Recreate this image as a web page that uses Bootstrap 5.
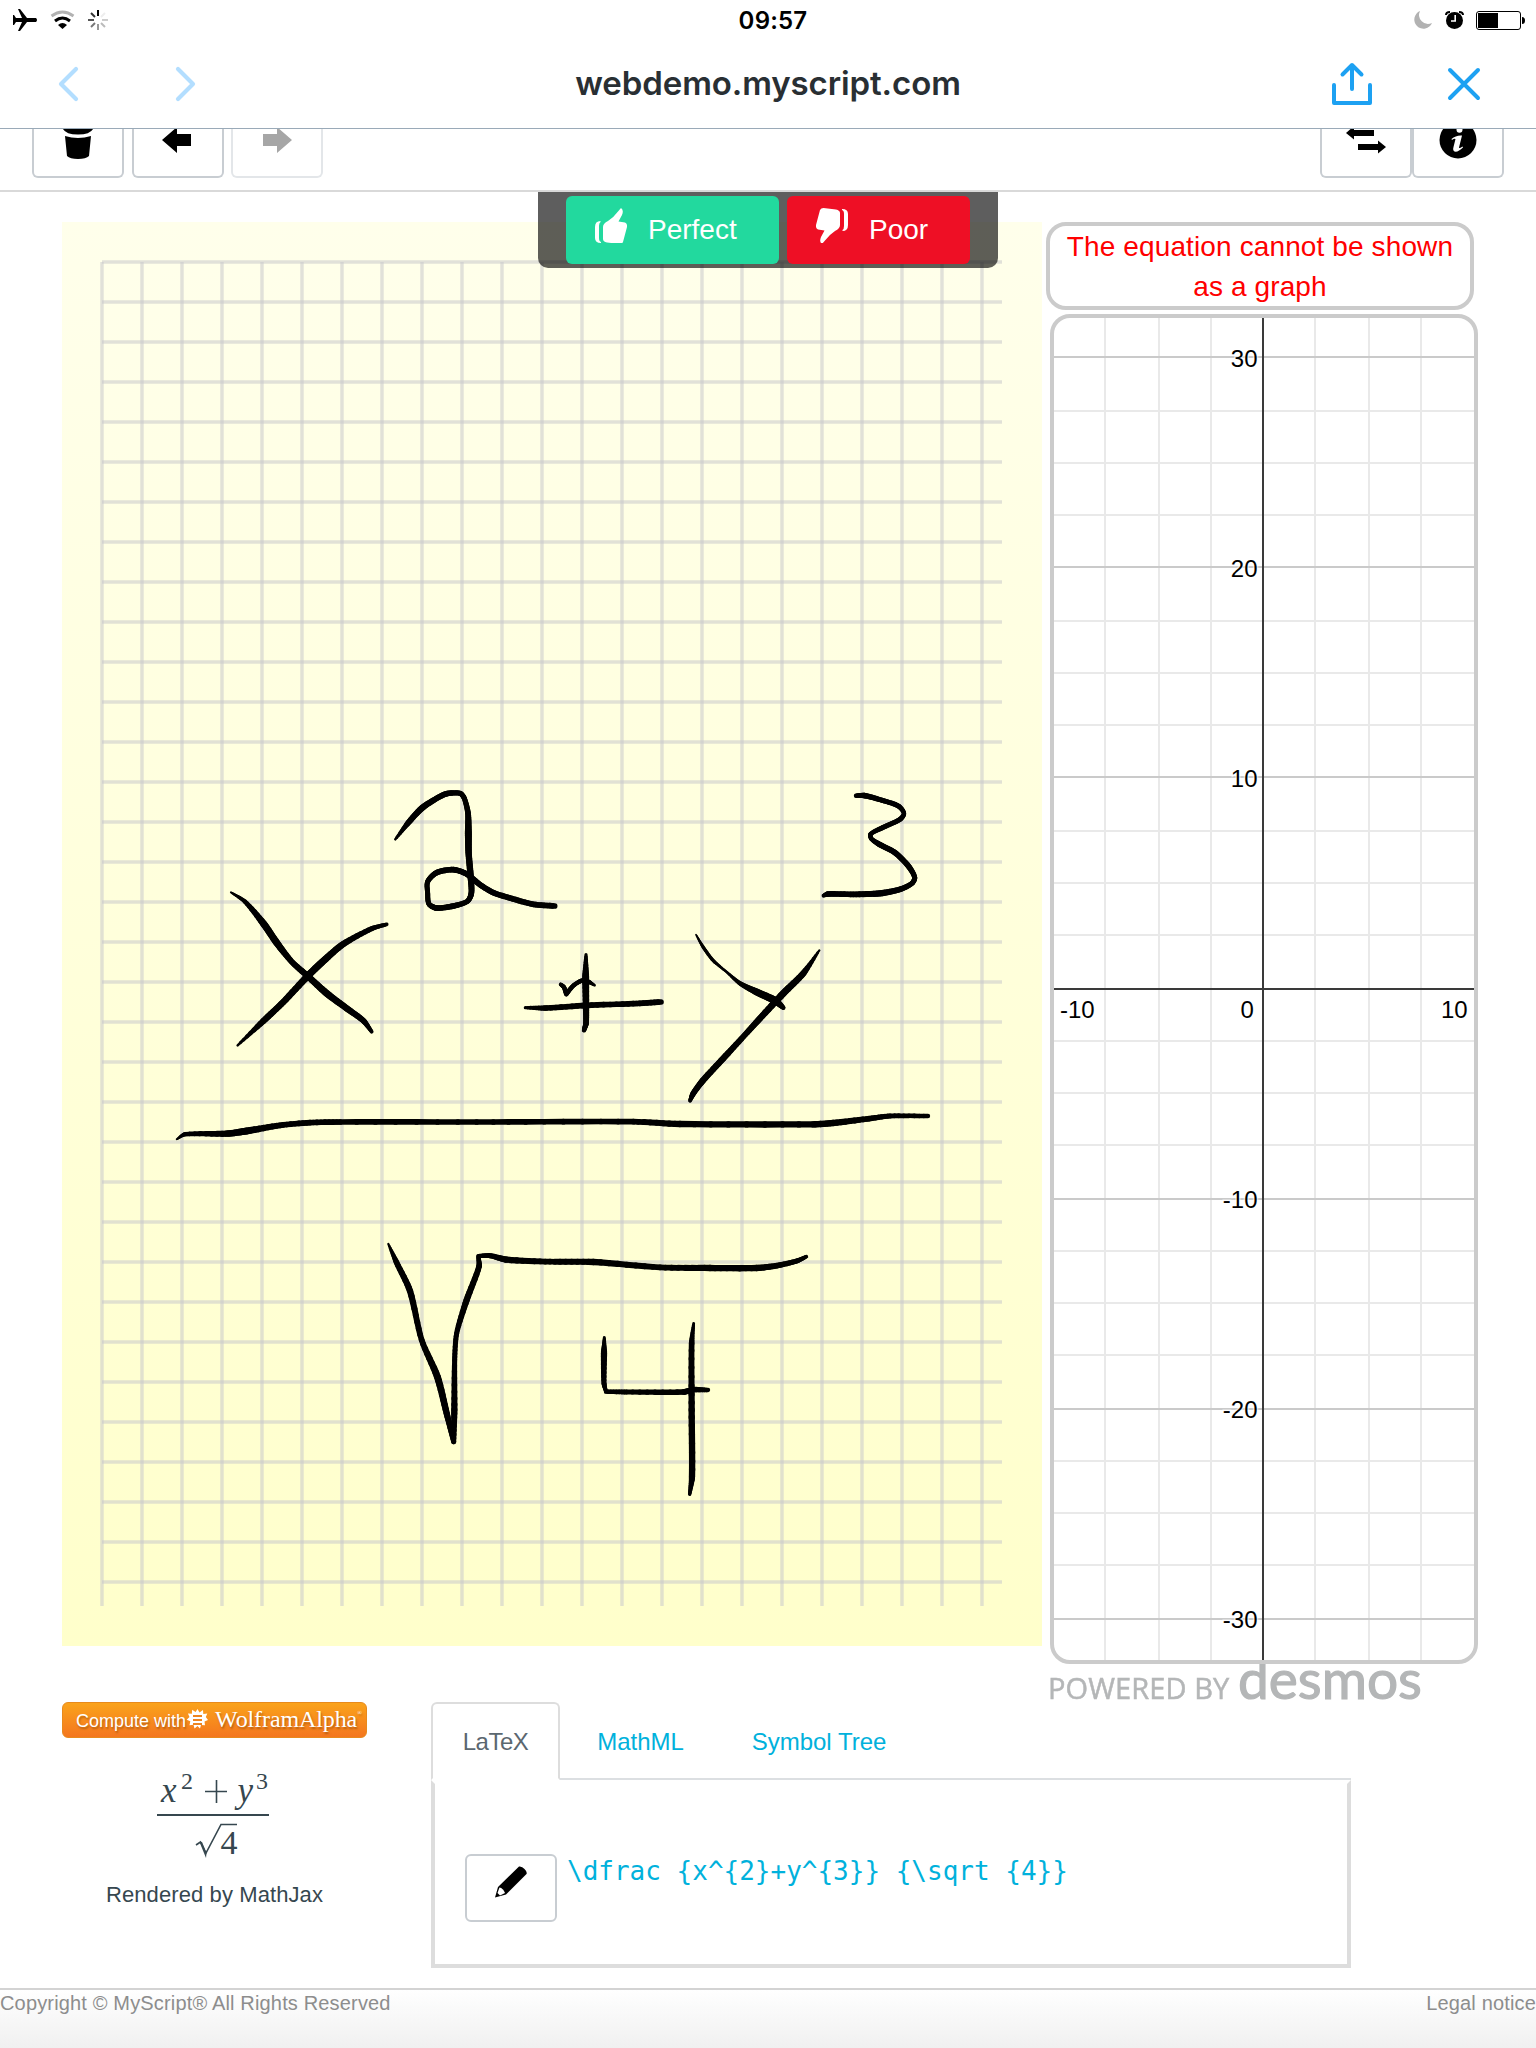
<!DOCTYPE html>
<html lang="en">
<head>
<meta charset="utf-8">
<meta name="viewport" content="width=device-width, initial-scale=1">
<title>webdemo.myscript.com</title>
<link href="https://cdn.jsdelivr.net/npm/bootstrap@5.3.0/dist/css/bootstrap.min.css" rel="stylesheet">
<style>
body{font-family:"Liberation Sans",Arial,sans-serif;color:#36474f;width:1536px;height:2048px;overflow:hidden;background:#fff}
svg{display:block;flex:none}
.ios-head{height:129px;border-bottom:1px solid #9aaab8;font-family:Inter,sans-serif;color:#292f33}
.status-row{height:40px;color:#000}
.clock{font-size:24px;font-weight:600;line-height:42px;letter-spacing:.2px;padding-left:10px}
.url-row{height:88px}
.url-title{font-size:33px;font-weight:600;line-height:86px;letter-spacing:-.1px;white-space:nowrap}
.side{width:400px}
.tool-row{height:63px;border-bottom:2px solid #d9d9d9;padding:0 32px}
.tool-btn{width:92px;height:49px;border:2px solid #c8cdd2;border-top:0;border-radius:0 0 6px 6px;padding:0;background:#fff}
.tool-btn.off{border-color:#e3e6e9;margin-left:-1px}
.tool-btn svg{margin-left:-2px}
.stage{height:1510px;padding:30px 0 0 62px;gap:4px}
.paper{width:980px;height:1424px;background:linear-gradient(#ffffeb,#ffffcb)}
.rating{left:538px;top:0;width:460px;height:76px;padding:4px 28px 4px;background:rgba(0,0,0,.63);border-radius:0 0 10px 10px;gap:8px}
.rate-btn{height:68px;border:0;border-radius:6px;color:#fff;font-size:28px;line-height:40px;padding:7px 0 0 29px;gap:21px}
.rate-btn.good{background:#22d99e;width:213px}
.rate-btn.bad{background:#ee0f25;width:183px}
.rate-btn span{padding-top:7px}
.notice{width:428px;height:88px;border:4px solid #cbcbcb;border-radius:20px;color:#f00;font-size:28px;line-height:40px;letter-spacing:.12px;padding-top:1px;white-space:nowrap}
.plot{width:428px;height:1350px;border:4px solid #cbcbcb;border-radius:20px;margin:4px 0 0 4px;overflow:hidden;background:#fff}
.powered{height:38px;color:#b4b6b7;padding-left:2px;filter:blur(.7px);white-space:nowrap}
.powered .by{font:400 29px/40px "Open Sans",sans-serif;letter-spacing:.1px;padding-top:4px;width:186px;-webkit-text-stroke:.5px #b4b6b7}
.powered .brand{font:400 55px/66px Lato,sans-serif;margin:-19px 0 0 4px;-webkit-text-stroke:1.2px #b4b6b7}
.results{padding-left:62px;gap:64px;height:286px}
.wolf{width:305px;height:36px;border:1px solid #e88a1c;border-radius:6px;background:linear-gradient(#faa31b,#f4761f);color:#fff;padding:0 0 0 13px;text-shadow:1px 2px 2px rgba(120,60,0,.5);white-space:nowrap}
.wolf .cw{font-size:18px;line-height:24px;padding-top:6px;width:103px}
.wolf .wa{font:24px/32px "Liberation Serif",serif;letter-spacing:-.1px}
.left-col{width:305px}
.mj{font-size:22px;line-height:30px;letter-spacing:.1px}
.right-col{width:920px}
.nav-tabs.lang-tabs{border-bottom:2px solid #dcdfe2;height:78px}
.lang-tabs .nav-link{height:78px;border:2px solid transparent;font-size:24px;line-height:36px;padding:20px 0;color:#00b1dc;text-align:center;margin-bottom:-2px;border-radius:6px 6px 0 0}
.lang-tabs .nav-link.active{border-color:#ddd #ddd #fff;color:#5b6770;letter-spacing:-.5px}
.code-box{height:188px;border:4px solid #ddd;border-top:4px solid #fff;padding:70px 0 0 30px;gap:10px}
.pen-btn{width:92px;height:68px;border:2px solid #c8cdd2;border-radius:6px;background:#fff;padding:0}
.code-text{font:26px/34px "DejaVu Sans Mono",monospace;color:#00b1dc;white-space:pre}
.foot{height:60px;border-top:2px solid #d3d3d3;background:linear-gradient(#fff,#f0f0f0);color:#8d8d8d;font-size:20px;line-height:27px;letter-spacing:.16px}
</style>
<script src="https://cdn.jsdelivr.net/npm/bootstrap@5.3.0/dist/js/bootstrap.bundle.min.js"></script>
</head>
<body>
<header class="ios-head">
  <div class="status-row d-flex justify-content-between">
    <svg class="side" height="40" viewBox="0 0 400 40">
      <path d="M36 18H27L20 9H18L22 18H16L14 15H13V25H14L16 22H22L18 31H20L27 22H36Q38 20 36 18Z"/>
      <path d="M51.500 16Q62.500 8 73.500 16" fill="none" stroke="#b2b2b2" stroke-width="2.800"/>
      <path d="M55 21Q62.500 15 70 21" fill="none" stroke="#000" stroke-width="3"/>
      <path d="M58 25Q62.500 21 67 25L62.500 29Z"/>
      <g stroke-width="2" fill="none"><path stroke="#000" d="M98 10v6"/><path stroke="#eee" d="M101 17l4-4"/><path stroke="#ccc" d="M102 20h6"/><path stroke="#bbb" d="M101 23l4 4"/><path stroke="#999" d="M98 24v6"/><path stroke="#777" d="M95 23l-4 4"/><path stroke="#555" d="M94 20h-6"/><path stroke="#333" d="M95 17l-4-4"/></g>
    </svg>
    <div class="clock d-flex flex-fill justify-content-center">09:57</div>
    <svg class="side" height="40" viewBox="1136 0 400 40">
      <path d="M1420 11A9.200 9.200 0 1 0 1432 23A9 9 0 0 1 1420 11Z" fill="#b2b2b2"/>
      <circle cx="1454.500" cy="20.500" r="8.500"/><path d="M1446 15Q1446 12 1450 12M1459 12Q1463 12 1463 15" fill="none" stroke="#000" stroke-width="2"/>
      <path d="M1455.200 15V21H1451" fill="none" stroke="#fff" stroke-width="1.600"/>
      <rect x="1476.500" y="11.500" width="44" height="18" rx="2.500" fill="none" stroke="#000"/><path d="M1478 13H1498V28H1478ZM1522 17Q1525 17 1525 20.500Q1525 24 1522 24Z"/>
    </svg>
  </div>
  <div class="url-row d-flex justify-content-between">
    <svg class="side" height="88" viewBox="0 40 400 88" fill="none" stroke="#b3deff" stroke-width="4.200" stroke-linecap="round" stroke-linejoin="round"><path d="M76 69L61 84L76 99M178 69L193 84L178 99"/></svg>
    <div class="url-title d-flex flex-fill justify-content-center">webdemo.myscript.com</div>
    <svg class="side" height="88" viewBox="1136 40 400 88" fill="none" stroke="#1da1f2" stroke-width="4" stroke-linecap="round" stroke-linejoin="round"><path d="M1352 89V65M1342.500 74.500L1352 65L1361.500 74.500M1334 85V103H1370V85M1450 70L1478 98M1478 70L1450 98"/></svg>
  </div>
</header>
<div class="tool-row d-flex align-items-start justify-content-between">
  <div class="d-flex gap-2">
    <button class="tool-btn" aria-label="Clear"><svg width="92" height="47" viewBox="32 129 92 47"><path d="M62.500 128H93.500Q91 134.500 78 134.500Q65 134.500 62.500 128ZM65 136Q78 140 91 136L89 156Q86 159 78 159Q70 159 67 156Z"/></svg></button>
    <button class="tool-btn" aria-label="Undo"><svg width="92" height="47" viewBox="132 129 92 47"><path d="M162 140L177 127V134H191V146H177V153Z"/></svg></button>
    <button class="tool-btn off" aria-label="Redo" disabled><svg width="92" height="47" viewBox="231 129 92 47"><path fill="#a6a6a6" d="M292 140L277 127V134H263V146H277V153Z"/></svg></button>
  </div>
  <div class="d-flex">
    <button class="tool-btn" aria-label="Swap"><svg width="92" height="47" viewBox="1320 129 92 47"><path d="M1346 133L1354 126V130H1374V136H1354V139.500ZM1386 147L1378 140.500V144H1358V150H1378V153.500Z"/></svg></button>
    <button class="tool-btn" aria-label="Info"><svg width="92" height="47" viewBox="1412 129 92 47"><circle cx="1458" cy="140" r="18.500"/><circle cx="1459.500" cy="129.800" r="3" fill="#fff"/><path d="M1451.500 139Q1456 135 1462 135.500L1459 147.500Q1459 149 1462.500 146.500L1463 147.500Q1458 152.500 1454.500 151.500Q1452.500 150.500 1453.500 147L1455.500 139Q1454.500 138 1452 140Z" fill="#fff"/></svg></button>
  </div>
</div>
<main class="position-relative">
  <div class="stage d-flex align-items-start">
    <svg class="paper" viewBox="62 222 980 1424">
      <defs><filter id="soft"><feGaussianBlur stdDeviation=".6"/></filter></defs>
      <g id="rules" fill="none" stroke="#c9c9cb" stroke-width="3.400" stroke-opacity=".56" filter="url(#soft)"></g>
      <g id="ink" stroke="#000" stroke-linecap="round"></g>
    </svg>
    <div>
      <div class="notice text-center">The equation cannot be shown<br>as a graph</div>
      <div class="plot position-relative z-1"><svg id="graph" width="420" height="1342" viewBox="1054 318 420 1342" font-family="Liberation Sans,Arial,sans-serif" font-size="24"></svg></div>
      <div class="powered d-flex align-items-start"><span class="by">POWERED BY</span><span class="brand">desmos</span></div>
    </div>
  </div>
  <div class="rating position-absolute d-flex">
    <button class="rate-btn good d-flex"><svg width="32" height="40" viewBox="595 203 32 40"><g id="thumb" fill="#fff"><path d="M600.500 221V222Q599 223 599 226V238Q599 241.500 601 242V243Q595 243 595 238V227Q595 221 600.500 221Z"/><path d="M621 208Q624 210 622 215L618.500 221.500L625 222.500Q627.500 223.500 627 227L623 242Q622 244 619.500 244L607 242.500Q603 241.500 603 239V227Q603 223.500 608 221Q614 217 618 211.500Z"/></g></svg><span>Perfect</span></button>
    <button class="rate-btn bad d-flex"><svg width="32" height="40" viewBox="816 203 32 40"><use href="#thumb" transform="translate(1443 452) rotate(180)"/></svg><span>Poor</span></button>
  </div>
</main>
<section class="results d-flex align-items-start">
  <div class="left-col">
    <div class="wolf d-flex"><span class="cw">Compute with</span>
      <svg width="36" height="34" viewBox="180 1702 36 34"><path fill="#fff" d="M198.500 1708l2 3.500 3.500-2.500.3 4 4-.5-1.500 3.500 2.200 3-3.500 1.500.5 3.800-4-.3-1 3.500-2.500-2.500-3 2.500-1-3.800-4 .5.800-4-3.600-1.500 2.800-2.700-1.600-3.500 4 .3.200-4 3.500 2.200z"/><path stroke="#ee8420" stroke-width="1.800" d="M194 1715h9M194 1719h9M194 1723h9"/></svg>
      <span class="wa">WolframAlpha<sup style="font-size:6px;top:-12px">®</sup></span></div>
    <svg width="305" height="142" viewBox="62 1738 305 142" font-family="Liberation Serif,serif" fill="#36474f">
      <g font-style="italic" font-size="35"><text x="161" y="1802">x</text><text x="237.500" y="1802">y</text></g>
      <text x="181" y="1789" font-size="24">2</text><text x="256" y="1789" font-size="24">3</text>
      <path d="M205 1791.500H227M216.500 1780V1803" stroke="#36474f" stroke-width="1.600"/>
      <path d="M157 1814H269V1816H157Z"/>
      <path d="M196 1845L200.500 1842L206 1853L221 1824.500H237" fill="none" stroke="#36474f" stroke-width="1.600"/><path d="M199.500 1842L206 1858L206.500 1853L202 1842Z"/>
      <text x="220.500" y="1854" font-size="34">4</text>
    </svg>
    <div class="mj text-center">Rendered by MathJax</div>
  </div>
  <div class="right-col">
    <ul class="nav nav-tabs lang-tabs flex-nowrap">
      <li class="nav-item"><a class="nav-link active" style="width:129px">LaTeX</a></li>
      <li class="nav-item"><a class="nav-link" style="width:161px">MathML</a></li>
      <li class="nav-item"><a class="nav-link" style="width:196px">Symbol Tree</a></li>
    </ul>
    <div class="code-box d-flex align-items-start">
      <button class="pen-btn" aria-label="Edit"><svg width="88" height="64" viewBox="467 1856 88 64"><path d="M519 1866.500Q522 1866 524.500 1869Q527.500 1872 526.500 1874L506 1894.500L495 1897.500L498 1887Z"/><path d="M499.500 1887.500Q503 1888 505 1893L500 1895.500L497.500 1893Z" fill="#fff"/></svg></button>
      <div class="code-text">\dfrac {x^{2}+y^{3}} {\sqrt {4}}</div>
    </div>
  </div>
</section>
<footer class="foot d-flex justify-content-between"><span>Copyright © MyScript® All Rights Reserved</span><span>Legal notice</span></footer>
<script>
const NS='http://www.w3.org/2000/svg';
function add(parent,tag,attrs,text){const e=document.createElementNS(NS,tag);for(const k in attrs)e.setAttribute(k,attrs[k]);if(text!==undefined)e.textContent=text;parent.appendChild(e);return e}

// squared paper
let rows='',cols='';
for(let y=262;y<=1582;y+=40)rows+=`M102 ${y}H1002`;
for(let x=102;x<=982;x+=40)cols+=`M${x} 262V1606`;
add(document.getElementById('rules'),'path',{d:rows});
add(document.getElementById('rules'),'path',{d:cols});

// graph grid and axes
const g=document.getElementById('graph');
const rowY=k=>k>0?987-210*k:989-210*k;
for(const x of [1105,1159,1211,1315,1369,1421])add(g,'path',{d:`M${x} 318V1660`,stroke:'#e9e9e9','stroke-width':2});
for(let k=-3;k<=3;k++){
  const y=rowY(k);
  for(const o of [52,104,156])if(y+o<1660)add(g,'path',{d:`M1054 ${k>0?y+o+2:y+o}H1474`,stroke:'#e9e9e9','stroke-width':2});
  if(k)add(g,'path',{d:`M1054 ${y}H1474`,stroke:'#cacaca','stroke-width':2});
}
add(g,'path',{d:'M1263 318V1660M1054 989H1474',stroke:'#3a3a3a','stroke-width':2});
const label={fill:'#000',stroke:'#fff','stroke-width':3,'stroke-opacity':.6,'paint-order':'stroke'};
for(const k of [3,2,1,-1,-2,-3])add(g,'text',{...label,x:1257.500,y:rowY(k)+(k>0?10:9),'text-anchor':'end'},k*10);
add(g,'text',{...label,x:1060,y:1018},'-10');
add(g,'text',{...label,x:1240.500,y:1018},'0');
add(g,'text',{...label,x:1441,y:1018},'10');

// pen strokes: x, y, pen width, in thirds of a pixel from each origin
const pen=[
 [160,760,[
  [213,397,5,255,425,12,310,490,20,350,548,20,395,605,16,443,648,18,500,700,20,560,745,18,610,782,16,635,815,10],
  [680,493,10,635,506,14,550,552,18,490,603,20,443,648,20,370,726,18,310,783,18,233,856,6],
  [706,238,6,745,188,16,785,145,18,825,118,16,860,101,16,900,100,14,913,115,14,924,160,16,925,220,20,926,280,18,932,350,18,934,400,16,922,424,14,880,438,16,830,444,16,807,432,14,803,400,14,803,365,14,830,338,16,880,329,16,920,342,16,960,374,16,1000,398,16,1050,414,16,1120,433,16,1184,438,16],
  [1202,673,10,1212,682,12,1219,702,13],[1219,702,13,1240,677,12,1265,662,12,1285,665,12,1304,676,6],
  [1278,584,8,1277,650,20,1278,740,18,1278,790,16,1272,811,12],
  [1096,743,8,1160,744,16,1280,736,16,1420,731,16,1503,726,16],
  [50,1138,4,75,1123,12,200,1121,18,260,1113,20,360,1096,16,450,1088,16,540,1086,16,1000,1086,16,1420,1085,16,1560,1092,18,1960,1093,18,2020,1089,18,2120,1077,16,2190,1068,14,2304,1068,12]]],
 [500,760,[
  [588,524,4,610,562,9,640,602,9,680,636,6,720,670,12,770,696,20,825,722,22,850,743,12],
  [958,571,5,910,640,18,850,700,20,780,775,18,730,830,16,670,895,18,610,960,18,580,1000,16,570,1022,10],
  [1068,107,12,1095,107,16,1150,122,14,1195,138,14,1212,160,12,1200,178,14,1150,202,14,1112,222,12,1114,236,12,1140,254,16,1185,278,16,1225,318,16,1244,352,14,1236,370,14,1200,388,16,1140,400,18,1060,403,16,985,402,16,970,407,9]]],
 [360,1210,[
  [85,102,5,110,158,16,150,243,18,185,390,16,232,500,20,260,610,18,281,695,14],
  [281,695,14,283,600,18,284,450,14,290,370,14,320,270,18,357,170,16,355,139,11],
  [355,138,11,390,137,14,440,149,18,570,155,16,700,156,18,900,172,16,1050,174,18,1190,174,18,1250,167,16,1310,153,14,1339,140,10],
  [733,382,7,732,430,18,732,520,14,738,545,10],[738,545,12,800,546,14,970,546,16,1000,539,16,1044,540,12],
  [1001,340,7,995,400,16,995,600,18,996,800,18,989,853,9]]]
];
const ink=document.getElementById('ink');
for(const [ox,oy,strokes] of pen){
  const grp=add(ink,'g',{transform:`translate(${ox} ${oy}) scale(.33333)`});
  for(const s of strokes){
    const p=[];for(let i=0;i<s.length;i+=3)p.push([s[i],s[i+1],s[i+2]]);
    for(let i=0;i<p.length-1;i++){
      const a=p[i],b=p[i+1],z=p[i-1]||a,n=p[i+2]||b,len=Math.hypot(b[0]-a[0],b[1]-a[1])*.8;
      // tangents scaled to this segment keep uneven spacing from overshooting
      const tan=(u,v)=>{const l=Math.hypot(v[0]-u[0],v[1]-u[1])||1;return[(v[0]-u[0])/l*len,(v[1]-u[1])/l*len]};
      const t0=tan(z,b),t1=tan(a,n),N=8;let q=a;
      for(let k=1;k<=N;k++){
        const t=k/N,h=t*t*t,e=t*t;
        const c=j=>(2*h-3*e+1)*a[j]+(h-2*e+t)*t0[j]+(-2*h+3*e)*b[j]+(h-e)*t1[j];
        const r=[c(0),c(1)];
        add(grp,'path',{d:`M${q[0]} ${q[1]}L${r[0]} ${r[1]}`,'stroke-width':a[2]+(b[2]-a[2])*(t-.06)+1});
        q=r;
      }
    }
  }
}
</script>
</body>
</html>
